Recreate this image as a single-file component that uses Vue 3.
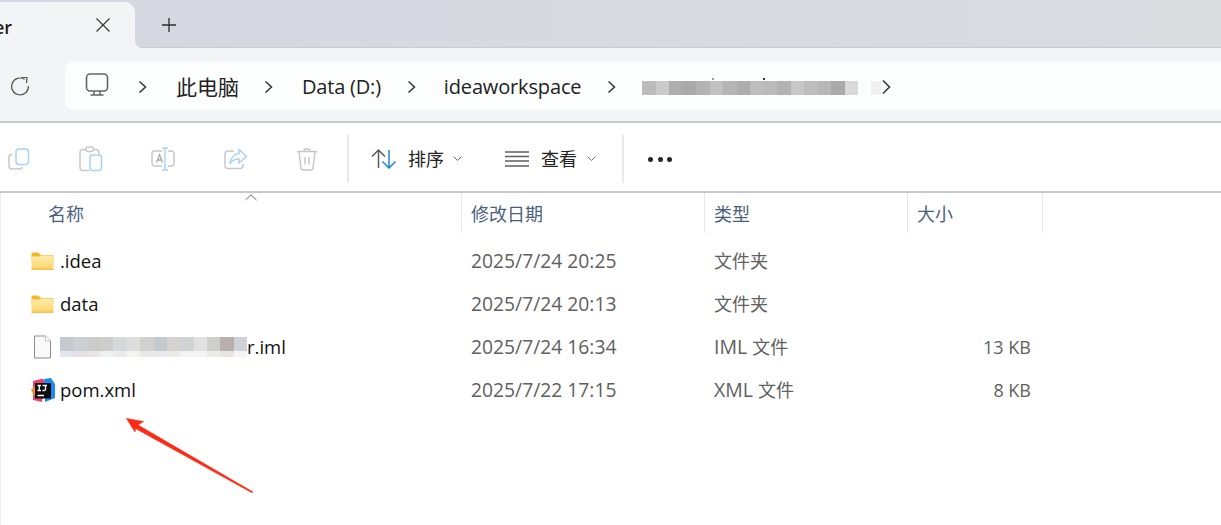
<script setup>
const crumbBlur = ['#bcbcbc','#c9cac9','#adadad','#a9a9a9','#b1b2b1','#c0c1c0','#b4b5b4','#acadac','#bcbdbc','#b9bab9','#b2b3b2','#c8c8c8','#bdbdbd','#b6b7b6','#a9a9a9','#d8d8d8']
const fileBlur = ['#c3cbce','#ccd0d4','#cbcbcb','#cdcecc','#d6d8da','#dddddb','#d1d0ce','#c3cace','#d5d3cf','#d0d2d4','#e1e1e1','#cfcecd','#baafaf','#d0d1d4']
const fileBlurLow = ['#e2e7ef','#e4dfe4','#e6e4e4','#eef1f2','#e9eaea','#f3f3f1','#e9e8e8','#e8eaed','#ede9e5','#f2f3f3','#f2f2f2','#ecebe8','#e9e3e2','#f4f4f5']
const rows = [
  { name: '.idea', icon: 'folder', date: '2025/7/24 20:25', prefix: '', type: '文件夹', size: '' },
  { name: 'data', icon: 'folder', date: '2025/7/24 20:13', prefix: '', type: '文件夹', size: '' },
  { name: 'r.iml', icon: 'file', date: '2025/7/24 16:34', prefix: 'IML ', type: '文件', size: '13 KB' },
  { name: 'pom.xml', icon: 'idea', date: '2025/7/22 17:15', prefix: 'XML ', type: '文件', size: '8 KB' }
]
</script>

<template>
  <div class="page">
    <div class="tabstrip">
      <div class="tab">
        <span class="tab-title">er</span>
        <svg class="tab-close" width="16" height="16" viewBox="0 0 16 16"><path d="M1.500 1.500 L14.500 14.500 M14.500 1.500 L1.500 14.500" stroke="#3a3a3a" stroke-width="1.200" fill="none"/></svg>
      </div>
      <svg class="tab-plus" width="16" height="16" viewBox="0 0 16 16"><path d="M8 1 V15 M1 8 H15" stroke="#2c2c2c" stroke-width="1.300" fill="none"/></svg>
    </div>

    <div class="navbar">
      <svg class="refresh" width="20" height="20" viewBox="0 0 20 20"><path d="M14.600 3.400 A8.400 8.400 0 1 0 18.400 10" stroke="#555" stroke-width="1.200" fill="none"/><path d="M11.500 1.500 H17 V1.500 L16.500 7" stroke="#555" stroke-width="1.200" fill="none"/></svg>
      <div class="address">
        <svg class="pc" width="24" height="24" viewBox="0 0 24 24"><rect x="1.500" y="1" width="21" height="17" rx="3.500" stroke="#666" stroke-width="1.600" fill="none"/><path d="M9 18 V21.500 M15 18 V21.500 M5.500 22 H18.500" stroke="#666" stroke-width="1.500" fill="none"/></svg>
        <svg class="chev first" width="9" height="14" viewBox="0 0 9 14"><path d="M1.500 1.500 L7.500 7 L1.500 12.500" stroke="#333" stroke-width="1.500" fill="none"/></svg>
        <span class="crumb c1">此电脑</span>
        <svg class="chev" width="9" height="14" viewBox="0 0 9 14"><path d="M1.500 1.500 L7.500 7 L1.500 12.500" stroke="#333" stroke-width="1.500" fill="none"/></svg>
        <span class="crumb c2">Data (D:)</span>
        <svg class="chev" width="9" height="14" viewBox="0 0 9 14"><path d="M1.500 1.500 L7.500 7 L1.500 12.500" stroke="#333" stroke-width="1.500" fill="none"/></svg>
        <span class="crumb c3">ideaworkspace</span>
        <svg class="chev" width="9" height="14" viewBox="0 0 9 14"><path d="M1.500 1.500 L7.500 7 L1.500 12.500" stroke="#333" stroke-width="1.500" fill="none"/></svg>
        <div class="blur crumb-blur">
          <b class="speck s1"></b>
          <b class="speck s2"></b>
          <i v-for="(c, i) in crumbBlur" :key="i" :style="{ background: c }"></i>
        </div>
        <div class="patch"></div>
        <svg class="chev last" width="9" height="16" viewBox="0 0 9 16"><path d="M1 1.500 L7.500 8 L1 14.500" stroke="#333" stroke-width="1.500" fill="none"/></svg>
      </div>
    </div>

    <div class="toolbar">
      <div class="tool-group">
        <svg width="22" height="22" viewBox="0 0 22 22"><path d="M4.500 6.500 H3.500 A2.500 2.500 0 0 0 1 9 V18 A3 3 0 0 0 4 21 H12 A3 3 0 0 0 14.500 19" stroke="#c8c8c8" stroke-width="1.500" fill="none"/><rect x="8" y="1" width="12.500" height="15.500" rx="3" stroke="#a6d3f5" stroke-width="1.500" fill="#fff"/></svg>
        <svg width="24" height="26" viewBox="0 0 24 26"><path d="M7 3.500 H4 A3 3 0 0 0 1 6.500 V21.500 A3 3 0 0 0 4 24.500 H10 M20 8 V6.500 A3 3 0 0 0 17 3.500 H14" stroke="#c8c8c8" stroke-width="1.500" fill="none"/><rect x="7" y="1" width="7.500" height="4.500" rx="2" stroke="#c8c8c8" stroke-width="1.500" fill="#fff"/><rect x="11" y="9" width="11.500" height="15.500" rx="2.500" stroke="#a6d3f5" stroke-width="1.500" fill="#fff"/></svg>
        <svg width="24" height="24" viewBox="0 0 24 24"><path d="M11 4 H3.500 A2.500 2.500 0 0 0 1 6.500 V16.500 A2.500 2.500 0 0 0 3.500 19 H11 M17 4 H20.500 A2.500 2.500 0 0 1 23 6.500 V16.500 A2.500 2.500 0 0 1 20.500 19 H17" stroke="#c8c8c8" stroke-width="1.500" fill="none"/><path d="M5.500 15.500 L8.500 7.500 L11.500 15.500 M6.500 13 H10.500" stroke="#a9a9a9" stroke-width="1.300" fill="none"/><path d="M14 1 V23 M11 1 H17 M11 23 H17" stroke="#a6d3f5" stroke-width="1.500" fill="none"/></svg>
        <svg width="24" height="22" viewBox="0 0 24 22"><path d="M10 3 H4 A3 3 0 0 0 1 6 V17.500 A3 3 0 0 0 4 20.500 H16 A3 3 0 0 0 19 17.500 V16" stroke="#c8c8c8" stroke-width="1.500" fill="none"/><path d="M15 1.500 L22.500 8.500 L15 15 V11 C11 11 8 12.500 6 15.500 C6.500 10 10 6 15 5.500 Z" stroke="#a6d3f5" stroke-width="1.500" fill="#fff" stroke-linejoin="round"/></svg>
        <svg width="22" height="24" viewBox="0 0 22 24"><path d="M1 4.500 H21 M8 4 C8 1 14 1 14 4 M3 4.500 L5 21 A2.500 2.500 0 0 0 7.500 23 H14.500 A2.500 2.500 0 0 0 17 21 L19 4.500 M9 10 V17.500 M13 10 V17.500" stroke="#c8c8c8" stroke-width="1.500" fill="none"/></svg>
      </div>
      <div class="tool-sep"></div>
      <div class="tool-btn sort">
        <svg width="26" height="20" viewBox="0 0 26 20"><path d="M7.500 19 V1 M1 7.500 L7.500 1 L14 7.500" stroke="#5a5a5a" stroke-width="1.500" fill="none"/><path d="M18 1 V19 M11.500 12.500 L18 19 L24.500 12.500" stroke="#1b86d6" stroke-width="1.500" fill="none"/></svg>
        <span class="tool-label">排序</span>
        <svg class="caret" width="9" height="6" viewBox="0 0 9 6"><path d="M0.500 0.500 L4.500 4.500 L8.500 0.500" stroke="#6a6a6a" stroke-width="1" fill="none"/></svg>
      </div>
      <div class="tool-btn view">
        <svg width="24" height="16" viewBox="0 0 24 16"><path d="M0 1 H24 M0 5.500 H24 M0 10 H24 M0 15 H24" stroke="#5f5f5f" stroke-width="1.300" fill="none"/></svg>
        <span class="tool-label">查看</span>
        <svg class="caret" width="9" height="6" viewBox="0 0 9 6"><path d="M0.500 0.500 L4.500 4.500 L8.500 0.500" stroke="#6a6a6a" stroke-width="1" fill="none"/></svg>
      </div>
      <div class="tool-sep"></div>
      <div class="more"><i></i><i></i><i></i></div>
    </div>

    <div class="list">
      <svg class="sort-caret" width="12" height="7" viewBox="0 0 12 7"><path d="M0.500 6 L6 0.800 L11.500 6" stroke="#666" stroke-width="1" fill="none"/></svg>
      <div class="head">
        <div class="col-name h">名称</div>
        <div class="col-date h">修改日期</div>
        <div class="col-type h">类型</div>
        <div class="col-size h">大小</div>
      </div>
      <div v-for="r in rows" :key="r.date" class="row">
        <div class="col-name cell">
          <svg v-if="r.icon === 'folder'" class="ficon" width="23" height="18" viewBox="0 0 23 18">
            <defs><linearGradient id="fg" x1="0" y1="0" x2="0" y2="1"><stop offset="0" stop-color="#ffecb0"/><stop offset="1" stop-color="#fbd468"/></linearGradient></defs>
            <path d="M0.500 2 A1.500 1.500 0 0 1 2 0.500 H7 L10 3 H22.500 V9 H0.500 Z" fill="#f7b825"/>
            <path d="M0.500 4.500 H8 L10.500 3.500 H22.500 V17.500 H0.500 Z" fill="url(#fg)"/>
            <path d="M0.500 17.200 H22.500" stroke="#eeb02e" stroke-width="1"/>
          </svg>
          <svg v-else-if="r.icon === 'file'" class="ficon" width="23" height="24" viewBox="0 0 23 24">
            <path d="M3.500 1 H14.500 L19.500 6 V23 H3.500 Z" fill="#fafafa" stroke="#8d8d8d" stroke-width="1"/>
            <path d="M14.500 1 V6 H19.500" fill="#fff" stroke="#c4c4c4" stroke-width="1"/>
          </svg>
          <svg v-else class="ficon" width="24" height="24" viewBox="0 0 24 24">
            <path d="M2 3 L12 0.500 L14 6 L11 24 L2 22 Z" fill="#ef3f72"/>
            <path d="M0 12 L4 8 L8 14 L4 19 Z" fill="#f58a1f"/>
            <path d="M13 1 L20 0 L24 6 L24 20 L14 24 Z" fill="#1a8cf0"/>
            <rect x="4" y="5" width="16" height="15.500" fill="#0c0c0c"/>
            <path d="M6.500 7.500 H10 M8.250 7.500 V12.500 M6.500 12.500 H10 M11.500 7.500 H16 M14.500 7.500 V11.300 Q14.500 12.500 13 12.500 H11.500 M6.500 17.500 H13" stroke="#fff" stroke-width="1.300" fill="none"/>
          </svg>
          <div v-if="r.icon === 'file'" class="name-wrap">
            <div class="file-blur">
              <div class="blur"><i v-for="(c, i) in fileBlur" :key="i" :style="{ background: c }"></i></div>
              <div class="blur low"><i v-for="(c, i) in fileBlurLow" :key="i" :style="{ background: c }"></i></div>
            </div>
            <span class="fname">{{ r.name }}</span>
          </div>
          <span v-else class="fname">{{ r.name }}</span>
        </div>
        <div class="col-date meta date">{{ r.date }}</div>
        <div class="col-type meta"><span class="latin">{{ r.prefix }}</span>{{ r.type }}</div>
        <div class="col-size meta size">{{ r.size }}</div>
      </div>

      <svg class="arrow" width="132" height="78" viewBox="0 0 132 78">
        <path d="M0.500 0.500 L17.500 3.500 L12 7 L127 74 L125.500 74.500 L9.500 10.500 L9 14 Z" fill="#fb2a14" stroke="#fb2a14" stroke-width="0.600" stroke-linejoin="round"/>
      </svg>
    </div>
  </div>
</template>

<style>
html, body { margin: 0; background: #fff; }
</style>

<style scoped>
.page {
  width: 1221px;
  height: 525px;
  overflow: hidden;
  display: flex;
  flex-direction: column;
  font-family: "Open Sans", "Noto Sans CJK SC", sans-serif;
  color: #1c1c1c;
}
.tabstrip {
  height: 48px;
  flex: none;
  display: flex;
  align-items: flex-end;
  box-sizing: border-box;
  background: linear-gradient(90deg, #d5d8e2, #d9dbdf);
  border-bottom: 1px solid #c9ccd3;
}
.tab {
  position: relative;
  width: 135px;
  height: 46px;
  margin-bottom: -1px;
  flex: none;
  box-sizing: border-box;
  background: #f3f4f6;
  border-radius: 0 10px 0 0;
  display: flex;
  align-items: center;
}
.tab::after {
  content: "";
  position: absolute;
  left: 100%;
  bottom: 0;
  width: 7px;
  height: 7px;
  background: radial-gradient(circle at 100% 0, transparent 6.500px, #f3f4f6 7px);
}
.tab-title {
  font-size: 18px;
  font-weight: 600;
  margin-left: -6px;
  padding-top: 4px;
}
.tab-close { margin-left: 83px; }
.tab-plus { margin: 0 0 14px 26px; }
.navbar {
  height: 73px;
  flex: none;
  box-sizing: border-box;
  background: #f3f4f6;
  padding: 14px 0 11px 10px;
  display: flex;
  align-items: stretch;
}
.refresh { align-self: center; margin-top: -1px; flex: none; }
.address {
  flex: 1;
  margin-left: 35px;
  padding-top: 2px;
  box-sizing: border-box;
  background: #fcfdfd;
  border-radius: 8px 0 0 8px;
  display: flex;
  align-items: center;
}
.pc { margin-left: 20px; flex: none; margin-top: -4px; }
.chev { flex: none; }
.chev.first { margin-left: 29px; }
.crumb { font-size: 20px; white-space: nowrap; line-height: 24px; color: #222; margin: 0 25px 0 29px; }
.c1 { font-size: 21px; }
.c2 { letter-spacing: -0.2px; margin-left: 29px; margin-right: 26px; }
.c3 { margin-left: 28px; margin-right: 26px; letter-spacing: -0.15px; }
.blur { display: flex; flex: none; }
.blur i { display: block; }
.crumb-blur { position: relative; margin-left: 26px; margin-top: 2px; height: 14px; }
.crumb-blur i { width: 13.500px; height: 14px; }
.speck { position: absolute; top: -3px; width: 2px; height: 2px; }
.s1 { left: 70px; background: #9a9a9a; }
.s2 { left: 121px; background: #333; }
.patch { width: 10px; height: 14px; margin-left: 13px; margin-top: 2px; background: #f0f0f0; flex: none; }
.chev.last { margin-left: 1px; }
.toolbar {
  height: 72px;
  flex: none;
  box-sizing: border-box;
  border-top: 2px solid #c6c8ce;
  border-bottom: 2px solid #c6c8ce;
  padding-top: 4px;
  background: #fff;
  display: flex;
  align-items: center;
}
.tool-group {
  width: 347px;
  flex: none;
  box-sizing: border-box;
  padding: 0 29px 0 8px;
  display: flex;
  align-items: center;
  justify-content: space-between;
}
.tool-sep { width: 2px; height: 48px; background: #e9e9e9; flex: none; }
.tool-btn { display: flex; align-items: center; flex: none; }
.tool-label { font-size: 18px; line-height: 24px; color: #222; }
.sort { margin-left: 22px; gap: 11px; }
.view { margin-left: 43px; gap: 12px; }
.sort .caret { margin-left: -2px; }
.view .caret { margin-left: -2px; }
.view + .tool-sep { margin-left: 26px; }
.more { margin-left: 24px; display: flex; gap: 4.500px; }
.more i { width: 5px; height: 5px; border-radius: 50%; background: #262626; display: block; }
.list {
  position: relative;
  flex: 1;
  border-left: 1px solid #eee;
}
.sort-caret { position: absolute; left: 244px; top: 1px; }
.head { display: flex; height: 40px; }
.row { display: flex; height: 43px; align-items: center; }
.head + .row { margin-top: 6px; }
.col-name { width: 461px; flex: none; box-sizing: border-box; }
.col-date { width: 243px; flex: none; box-sizing: border-box; }
.col-type { width: 203px; flex: none; box-sizing: border-box; }
.col-size { width: 135px; flex: none; box-sizing: border-box; }
.h {
  font-size: 18px;
  color: #4b5f7c;
  line-height: 42px;
  padding-left: 9px;
  border-right: 1px solid #e6e6e6;
}
.head .col-name { padding-left: 47px; }
.cell { display: flex; align-items: center; position: relative; height: 43px; }
.ficon { position: absolute; left: 29.500px; top: 50%; transform: translateY(-50%); }
.fname { font-size: 18.500px; line-height: 24px; color: #111; margin-left: 59px; white-space: nowrap; }
.name-wrap { display: flex; align-items: center; margin-left: 59px; }
.name-wrap .fname { margin-left: 0; }
.file-blur { width: 187px; height: 20px; flex: none; display: flex; flex-direction: column; }
.file-blur .blur { height: 14px; }
.file-blur .low { height: 6px; }
.file-blur i { flex: 1; height: 100%; }
.meta { font-size: 18px; color: #5f5f5f; padding-left: 9px; line-height: 24px; white-space: nowrap; }
.date { font-size: 19.300px; }
.latin { font-size: 19.500px; }
.size { text-align: right; padding-right: 12px; padding-left: 0; }
.arrow { position: absolute; left: 125px; top: 225px; }
</style>
